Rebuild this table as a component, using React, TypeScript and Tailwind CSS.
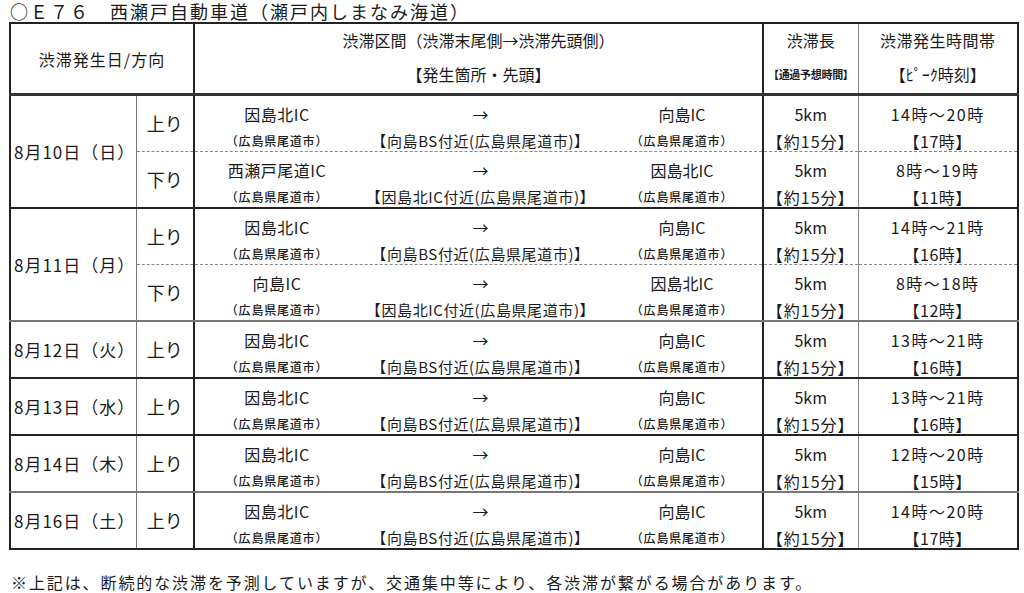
const font = { fontFamily: '"Noto Sans CJK JP", "Noto Sans", sans-serif' };

type Leg = {
  dir: string;
  from: string;
  head: string;
  to: string;
  time: string;
  peak: string;
};

type Day = { date: string; legs: Leg[]; sep: string };

const days: Day[] = [
  {
    date: "8月10日（日）",
    sep: "border-b-2 border-b-[#222]",
    legs: [
      { dir: "上り", from: "因島北IC", head: "【向島BS付近(広島県尾道市)】", to: "向島IC", time: "14時～20時", peak: "【17時】" },
      { dir: "下り", from: "西瀬戸尾道IC", head: "【因島北IC付近(広島県尾道市)】", to: "因島北IC", time: "8時～19時", peak: "【11時】" },
    ],
  },
  {
    date: "8月11日（月）",
    sep: "border-b-2 border-b-[#777]",
    legs: [
      { dir: "上り", from: "因島北IC", head: "【向島BS付近(広島県尾道市)】", to: "向島IC", time: "14時～21時", peak: "【16時】" },
      { dir: "下り", from: "向島IC", head: "【因島北IC付近(広島県尾道市)】", to: "因島北IC", time: "8時～18時", peak: "【12時】" },
    ],
  },
  {
    date: "8月12日（火）",
    sep: "border-b-2 border-b-[#222]",
    legs: [{ dir: "上り", from: "因島北IC", head: "【向島BS付近(広島県尾道市)】", to: "向島IC", time: "13時～21時", peak: "【16時】" }],
  },
  {
    date: "8月13日（水）",
    sep: "border-b-2 border-b-[#222]",
    legs: [{ dir: "上り", from: "因島北IC", head: "【向島BS付近(広島県尾道市)】", to: "向島IC", time: "13時～21時", peak: "【16時】" }],
  },
  {
    date: "8月14日（木）",
    sep: "border-b-2 border-b-[#777]",
    legs: [{ dir: "上り", from: "因島北IC", head: "【向島BS付近(広島県尾道市)】", to: "向島IC", time: "12時～20時", peak: "【15時】" }],
  },
  {
    date: "8月16日（土）",
    sep: "",
    legs: [{ dir: "上り", from: "因島北IC", head: "【向島BS付近(広島県尾道市)】", to: "向島IC", time: "14時～20時", peak: "【17時】" }],
  },
];

// main line + smaller note line, shared by every cell of a leg row
const top = "h-[36px] leading-[36px]";
const sub = "h-[19px] leading-[18px] whitespace-nowrap";

function LegCells({ leg, last, sep }: { leg: Leg; last: boolean; sep: string }) {
  const b = last ? sep : "border-b border-b-[#888] [border-bottom-style:dashed]";
  return (
    <>
      <td className={`border-l border-l-[#777] border-r-2 border-r-[#222] text-center text-[18px] ${b}`}>{leg.dir}</td>
      <td className={`p-0 ${b}`}>
        <div className="grid grid-cols-[164px_243px_1fr] h-[55px]">
          <div className="flex flex-col items-center">
            <div className={`text-[16px] tracking-[0.5px] ${top}`}>{leg.from}</div>
            <div className={`text-[12px] font-medium tracking-[0.8px] ${sub}`}>（広島県尾道市）</div>
          </div>
          <div className="flex flex-col items-center">
            <div className={`text-[16px] ${top}`}>→</div>
            <div className={`text-[15px] tracking-[0.6px] ${sub}`}>{leg.head}</div>
          </div>
          <div className="flex flex-col items-center">
            <div className={`text-[16px] ${top}`}>{leg.to}</div>
            <div className={`text-[12px] font-medium tracking-[0.8px] ${sub}`}>（広島県尾道市）</div>
          </div>
        </div>
      </td>
      <td className={`border-l-2 border-l-[#222] p-0 text-center ${b}`}>
        <div className={`text-[16px] ${top}`}>5km</div>
        <div className={`text-[16px] tracking-[1px] ${sub}`}>【約15分】</div>
      </td>
      <td className={`border-l border-l-[#888] p-0 text-center ${b}`}>
        <div className={`text-[16px] tracking-[1.5px] ${top}`}>{leg.time}</div>
        <div className={`text-[16px] tracking-[0.5px] ${sub}`}>{leg.peak}</div>
      </td>
    </>
  );
}

export default function App() {
  return (
    <div className="w-[1024px] h-[593px] bg-white text-[#1a1a1a] overflow-hidden" style={font}>
      <div className="pl-[10px] h-[22px] text-[18px] leading-[22px] tracking-[2px] whitespace-nowrap">○Ｅ７６　西瀬戸自動車道（瀬戸内しまなみ海道）</div>
      <table className="ml-[9px] w-[1010px] border-collapse border-2 border-[#222] table-fixed">
        <colgroup>
          <col className="w-[126px]" />
          <col className="w-[58px]" />
          <col className="w-[569px]" />
          <col className="w-[95px]" />
          <col />
        </colgroup>
        <thead>
          <tr className="h-[69px] border-b-[3px] border-b-[#333]">
            <th colSpan={2} className="font-normal text-[16px] text-center tracking-[1px]">渋滞発生日/方向</th>
            <th className="font-normal border-l-2 border-l-[#222] p-0">
              <div className="text-[16px] h-[34px] leading-[32px]">渋滞区間（渋滞末尾側→渋滞先頭側）</div>
              <div className="text-[16px] h-[35px] leading-[32px]">【発生箇所・先頭】</div>
            </th>
            <th className="font-normal border-l-2 border-l-[#222] p-0">
              <div className="text-[16px] h-[34px] leading-[32px]">渋滞長</div>
              <div className="text-[11px] font-semibold h-[35px] leading-[32px] tracking-[-0.3px] whitespace-nowrap">【通過予想時間】</div>
            </th>
            <th className="font-normal border-l border-l-[#888] p-0">
              <div className="text-[16px] h-[34px] leading-[32px] tracking-[0.5px]">渋滞発生時間帯</div>
              <div className="text-[16px] h-[35px] leading-[32px]">【ﾋﾟｰｸ時刻】</div>
            </th>
          </tr>
        </thead>
        <tbody>
          {days.map((d) =>
            d.legs.map((leg, i) => (
              <tr key={d.date + leg.dir}>
                {i === 0 && (
                  <td rowSpan={d.legs.length} className={`text-[17px] pl-[3px] tracking-[1px] whitespace-nowrap ${d.sep}`}>
                    {d.date}
                  </td>
                )}
                <LegCells leg={leg} last={i === d.legs.length - 1} sep={d.sep} />
              </tr>
            ))
          )}
        </tbody>
      </table>
      <div className="pl-[11px] mt-[20px] text-[16px] leading-[24px] tracking-[1.9px] whitespace-nowrap">
        ※上記は、断続的な渋滞を予測していますが、交通集中等により、各渋滞が繋がる場合があります。
      </div>
    </div>
  );
}
